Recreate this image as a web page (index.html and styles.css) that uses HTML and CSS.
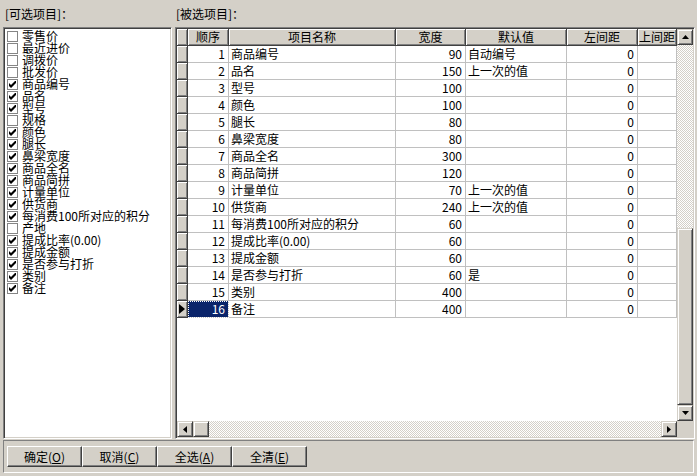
FILE: index.html
```html
<!DOCTYPE html>
<html>
<head>
<meta charset="utf-8">
<link rel="stylesheet" href="styles.css">
</head>
<body>
<div class="win">
  <div class="top">
    <div class="pane left">
      <div class="cap">[可选项目]：</div>
      <div class="list sunken">
        <div class="item"><span class="cb"></span>零售价</div>
        <div class="item"><span class="cb"></span>最近进价</div>
        <div class="item"><span class="cb"></span>调拨价</div>
        <div class="item"><span class="cb"></span>批发价</div>
        <div class="item"><span class="cb"><svg viewBox="0 0 7 7" width="7" height="7"><polygon points="0,2 2,4 7,-1 7,2 2,7 0,5"/></svg></span>商品编号</div>
        <div class="item"><span class="cb"><svg viewBox="0 0 7 7" width="7" height="7"><polygon points="0,2 2,4 7,-1 7,2 2,7 0,5"/></svg></span>品名</div>
        <div class="item"><span class="cb"><svg viewBox="0 0 7 7" width="7" height="7"><polygon points="0,2 2,4 7,-1 7,2 2,7 0,5"/></svg></span>型号</div>
        <div class="item"><span class="cb"></span>规格</div>
        <div class="item"><span class="cb"><svg viewBox="0 0 7 7" width="7" height="7"><polygon points="0,2 2,4 7,-1 7,2 2,7 0,5"/></svg></span>颜色</div>
        <div class="item"><span class="cb"><svg viewBox="0 0 7 7" width="7" height="7"><polygon points="0,2 2,4 7,-1 7,2 2,7 0,5"/></svg></span>腿长</div>
        <div class="item"><span class="cb"><svg viewBox="0 0 7 7" width="7" height="7"><polygon points="0,2 2,4 7,-1 7,2 2,7 0,5"/></svg></span>鼻梁宽度</div>
        <div class="item"><span class="cb"><svg viewBox="0 0 7 7" width="7" height="7"><polygon points="0,2 2,4 7,-1 7,2 2,7 0,5"/></svg></span>商品全名</div>
        <div class="item"><span class="cb"><svg viewBox="0 0 7 7" width="7" height="7"><polygon points="0,2 2,4 7,-1 7,2 2,7 0,5"/></svg></span>商品简拼</div>
        <div class="item"><span class="cb"><svg viewBox="0 0 7 7" width="7" height="7"><polygon points="0,2 2,4 7,-1 7,2 2,7 0,5"/></svg></span>计量单位</div>
        <div class="item"><span class="cb"><svg viewBox="0 0 7 7" width="7" height="7"><polygon points="0,2 2,4 7,-1 7,2 2,7 0,5"/></svg></span>供货商</div>
        <div class="item"><span class="cb"><svg viewBox="0 0 7 7" width="7" height="7"><polygon points="0,2 2,4 7,-1 7,2 2,7 0,5"/></svg></span>每消费100所对应的积分</div>
        <div class="item"><span class="cb"></span>产地</div>
        <div class="item"><span class="cb"><svg viewBox="0 0 7 7" width="7" height="7"><polygon points="0,2 2,4 7,-1 7,2 2,7 0,5"/></svg></span>提成比率(0.00)</div>
        <div class="item"><span class="cb"><svg viewBox="0 0 7 7" width="7" height="7"><polygon points="0,2 2,4 7,-1 7,2 2,7 0,5"/></svg></span>提成金额</div>
        <div class="item"><span class="cb"><svg viewBox="0 0 7 7" width="7" height="7"><polygon points="0,2 2,4 7,-1 7,2 2,7 0,5"/></svg></span>是否参与打折</div>
        <div class="item"><span class="cb"><svg viewBox="0 0 7 7" width="7" height="7"><polygon points="0,2 2,4 7,-1 7,2 2,7 0,5"/></svg></span>类别</div>
        <div class="item"><span class="cb"><svg viewBox="0 0 7 7" width="7" height="7"><polygon points="0,2 2,4 7,-1 7,2 2,7 0,5"/></svg></span>备注</div>
      </div>
    </div>
    <div class="pane right">
      <div class="cap">[被选项目]：</div>
      <div class="grid sunken">
        <div class="gtop">
          <div class="table">
            <div class="c h"></div><div class="c h">顺序</div><div class="c h">项目名称</div><div class="c h">宽度</div><div class="c h">默认值</div><div class="c h">左间距</div><div class="c h">上间距</div>

            <div class="c h"></div><div class="c r">1</div><div class="c">商品编号</div><div class="c r">90</div><div class="c">自动编号</div><div class="c r">0</div><div class="c"></div>
            <div class="c h"></div><div class="c r">2</div><div class="c">品名</div><div class="c r">150</div><div class="c">上一次的值</div><div class="c r">0</div><div class="c"></div>
            <div class="c h"></div><div class="c r">3</div><div class="c">型号</div><div class="c r">100</div><div class="c"></div><div class="c r">0</div><div class="c"></div>
            <div class="c h"></div><div class="c r">4</div><div class="c">颜色</div><div class="c r">100</div><div class="c"></div><div class="c r">0</div><div class="c"></div>
            <div class="c h"></div><div class="c r">5</div><div class="c">腿长</div><div class="c r">80</div><div class="c"></div><div class="c r">0</div><div class="c"></div>
            <div class="c h"></div><div class="c r">6</div><div class="c">鼻梁宽度</div><div class="c r">80</div><div class="c"></div><div class="c r">0</div><div class="c"></div>
            <div class="c h"></div><div class="c r">7</div><div class="c">商品全名</div><div class="c r">300</div><div class="c"></div><div class="c r">0</div><div class="c"></div>
            <div class="c h"></div><div class="c r">8</div><div class="c">商品简拼</div><div class="c r">120</div><div class="c"></div><div class="c r">0</div><div class="c"></div>
            <div class="c h"></div><div class="c r">9</div><div class="c">计量单位</div><div class="c r">70</div><div class="c">上一次的值</div><div class="c r">0</div><div class="c"></div>
            <div class="c h"></div><div class="c r">10</div><div class="c">供货商</div><div class="c r">240</div><div class="c">上一次的值</div><div class="c r">0</div><div class="c"></div>
            <div class="c h"></div><div class="c r">11</div><div class="c">每消费100所对应的积分</div><div class="c r">60</div><div class="c"></div><div class="c r">0</div><div class="c"></div>
            <div class="c h"></div><div class="c r">12</div><div class="c">提成比率(0.00)</div><div class="c r">60</div><div class="c"></div><div class="c r">0</div><div class="c"></div>
            <div class="c h"></div><div class="c r">13</div><div class="c">提成金额</div><div class="c r">60</div><div class="c"></div><div class="c r">0</div><div class="c"></div>
            <div class="c h"></div><div class="c r">14</div><div class="c">是否参与打折</div><div class="c r">60</div><div class="c">是</div><div class="c r">0</div><div class="c"></div>
            <div class="c h"></div><div class="c r">15</div><div class="c">类别</div><div class="c r">400</div><div class="c"></div><div class="c r">0</div><div class="c"></div>
            <div class="c h ind"><svg viewBox="0 0 6 10" width="6" height="10"><polygon points="0,0 6,5 0,10"/></svg></div><div class="c r sel">16</div><div class="c">备注</div><div class="c r">400</div><div class="c"></div><div class="c r">0</div><div class="c"></div>
          </div>
          <div class="vs">
            <div class="b3 sb"><svg viewBox="0 0 7 4" width="7" height="4"><polygon points="3.5,0 7,4 0,4"/></svg></div>
            <div class="track"></div>
            <div class="b3 vthumb"></div>
            <div class="b3 sb"><svg viewBox="0 0 7 4" width="7" height="4"><polygon points="0,0 7,0 3.5,4"/></svg></div>
          </div>
        </div>
        <div class="hs">
          <div class="b3 sb"><svg viewBox="0 0 4 7" width="4" height="7"><polygon points="4,0 4,7 0,3.5"/></svg></div>
          <div class="b3 hthumb"></div>
          <div class="track"></div>
          <div class="b3 sb"><svg viewBox="0 0 4 7" width="4" height="7"><polygon points="0,0 4,3.5 0,7"/></svg></div>
          <div class="corner"></div>
        </div>
      </div>
    </div>
  </div>
  <div class="bar">
    <div class="pb">确定(<u>O</u>)</div>
    <div class="pb">取消(<u>C</u>)</div>
    <div class="pb">全选(<u>A</u>)</div>
    <div class="pb">全清(<u>E</u>)</div>
  </div>
</div>
</body>
</html>
```

FILE: styles.css
```css
html, body { margin: 0; padding: 0; }
body {
  background: #d4d0c8;
  font-family: "Noto Sans CJK SC", "Noto Sans", sans-serif;
  font-size: 12px;
  color: #000;
}
.win {
  width: 697px;
  height: 476px;
  display: flex;
  flex-direction: column;
  overflow: hidden;
}
.top { display: flex; height: 439px; }
.pane { display: flex; flex-direction: column; }
.left { width: 169px; margin-left: 3px; }
.right { width: 520px; margin-left: 3px; }
.cap {
  height: 27px;
  box-sizing: border-box;
  padding-top: 7px;
  line-height: 14px;
  white-space: nowrap;
}
.left .cap { padding-left: 2px; }
.right .cap { padding-left: 1px; }

.sunken {
  box-sizing: border-box;
  border: 1px solid;
  border-color: #808080 #fff #fff #808080;
  padding: 1px;
  box-shadow: inset 1px 1px #404040, inset -1px -1px #d4d0c8;
}
.list {
  height: 412px;
  background: #fff;
  padding-top: 2px;
}
.item {
  height: 12px;
  line-height: 12px;
  display: flex;
  align-items: center;
  padding-left: 2px;
  white-space: nowrap;
}
.cb {
  width: 11px;
  height: 11px;
  box-sizing: border-box;
  border: 1px solid #858585;
  background: #fff;
  margin-right: 4px;
  flex: none;
  display: flex;
  align-items: center;
  justify-content: center;
}
.cb svg { display: block; }

.grid {
  height: 412px;
  display: flex;
  flex-direction: column;
}
.gtop { display: flex; height: 392px; }
.table {
  width: 500px;
  background: #fff;
  overflow: hidden;
  display: grid;
  grid-template-columns: 11px 41px 167px 70px 101px 71px 39px;
  grid-auto-rows: 17px;
  align-content: start;
}
.c {
  box-sizing: border-box;
  border-right: 1px solid #c0c0c0;
  border-bottom: 1px solid #c0c0c0;
  line-height: 16px;
  padding: 0 2px;
  white-space: nowrap;
  overflow: hidden;
}
.r { text-align: right; padding-right: 3px; }
.h {
  background: #d4d0c8;
  border-color: #404040;
  box-shadow: inset 1px 1px #fff, inset -1px -1px #808080;
  text-align: center;
  padding: 0;
}
.ind { display: flex; align-items: center; justify-content: center; }
.sel {
  background: #0a246a;
  color: #fff;
  outline: 1px dotted #fff;
  outline-offset: -1px;
}

.b3 {
  background: #d4d0c8;
  box-sizing: border-box;
  border: 1px solid;
  border-color: #d4d0c8 #404040 #404040 #d4d0c8;
  box-shadow: inset 1px 1px #fff, inset -1px -1px #808080;
}
.sb {
  width: 16px;
  height: 16px;
  flex: none;
  display: flex;
  align-items: center;
  justify-content: center;
}
.sb svg { display: block; }
.track {
  flex: 1;
  background: repeating-conic-gradient(#fff 0 25%, #d4d0c8 0 50%) 0 0 / 2px 2px;
}
.vs { width: 16px; display: flex; flex-direction: column; }
.vthumb { height: 177px; flex: none; }
.hs { display: flex; height: 16px; }
.hthumb { width: 16px; flex: none; }
.corner { width: 16px; flex: none; background: #d4d0c8; }

.bar {
  margin: 1px 0 0 3px;
  width: 691px;
  height: 33px;
  box-sizing: border-box;
  border: 1px solid;
  border-color: #808080 #fff #fff #808080;
  display: flex;
  padding: 5px 0 0 3px;
}
.pb {
  width: 75px;
  height: 21px;
  box-sizing: border-box;
  background: #d4d0c8;
  border: 1px solid;
  border-color: #fff #404040 #404040 #fff;
  box-shadow: inset -1px -1px #808080;
  text-align: center;
  line-height: 19px;
  white-space: nowrap;
}
.pb u { text-decoration: underline; text-underline-offset: 1px; }
```
